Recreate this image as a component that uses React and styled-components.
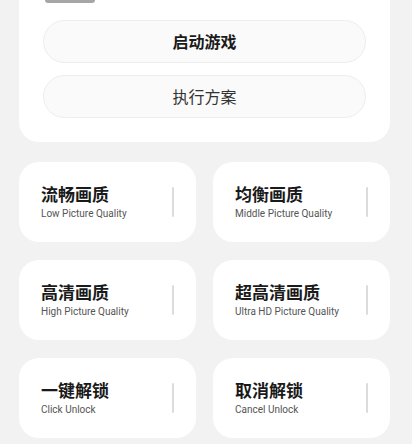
import React from "react";
import styled, { createGlobalStyle } from "styled-components";

const GlobalStyle = createGlobalStyle`
  body {
    margin: 0;
    background: #f2f2f2;
    font-family: Roboto, "Noto Sans CJK SC", sans-serif;
  }
`;

const modes = [
  { title: "流畅画质", sub: "Low Picture Quality" },
  { title: "均衡画质", sub: "Middle Picture Quality" },
  { title: "高清画质", sub: "High Picture Quality" },
  { title: "超高清画质", sub: "Ultra HD Picture Quality" },
  { title: "一键解锁", sub: "Click Unlock" },
  { title: "取消解锁", sub: "Cancel Unlock" },
];

export default function App() {
  return (
    <>
      <GlobalStyle />
      <Page>
        <ActionCard>
          <Handle />
          <PillButton $bold>启动游戏</PillButton>
          <PillButton>执行方案</PillButton>
        </ActionCard>
        <ModeGrid>
          {modes.map((m) => (
            <ModeCard key={m.title}>
              <ModeText>
                <ModeTitle>{m.title}</ModeTitle>
                <ModeSub>{m.sub}</ModeSub>
              </ModeText>
              <Divider />
            </ModeCard>
          ))}
        </ModeGrid>
      </Page>
    </>
  );
}

const Page = styled.div`
  display: flex;
  flex-direction: column;
  gap: 20px;
  padding: 0 22px 6px 19px;
`;

const ActionCard = styled.div`
  display: flex;
  flex-direction: column;
  gap: 12px;
  background: #fff;
  border-radius: 0 0 20px 20px;
  padding: 0 24px 24px 24px;
`;

const Handle = styled.div`
  width: 50px;
  height: 3px;
  margin: 0 0 5px 2px;
  background: #a6a6a6;
  border-radius: 0 0 4px 4px;
`;

const PillButton = styled.div`
  height: 41px;
  display: flex;
  align-items: center;
  justify-content: center;
  background: #fafafa;
  border: 1px solid #ededed;
  border-radius: 22px;
  font-family: "Noto Sans CJK SC", sans-serif;
  font-size: 16px;
  line-height: 20px;
  padding-bottom: 2px;
  box-sizing: border-box;
  height: 43px;
  font-weight: ${(p) => (p.$bold ? 700 : 400)};
  color: ${(p) => (p.$bold ? "#1a1a1a" : "#333")};
`;

const ModeGrid = styled.div`
  display: grid;
  grid-template-columns: 1fr 1fr;
  column-gap: 17px;
  row-gap: 18px;
`;

const ModeCard = styled.div`
  height: 80px;
  display: flex;
  align-items: center;
  justify-content: space-between;
  background: #fff;
  border-radius: 20px;
  padding: 0 22px 0 22px;
  box-sizing: border-box;
`;

const ModeText = styled.div`
  display: flex;
  flex-direction: column;
  gap: 3px;
`;

const ModeTitle = styled.div`
  font-family: "Noto Sans CJK SC", sans-serif;
  font-size: 17px;
  font-weight: 700;
  line-height: 20px;
  color: #1a1a1a;
`;

const ModeSub = styled.div`
  font-family: Roboto, sans-serif;
  font-size: 10px;
  line-height: 13px;
  color: #555;
`;

const Divider = styled.div`
  width: 2px;
  height: 30px;
  background: #dcdcdc;
  border-radius: 1px;
`;
